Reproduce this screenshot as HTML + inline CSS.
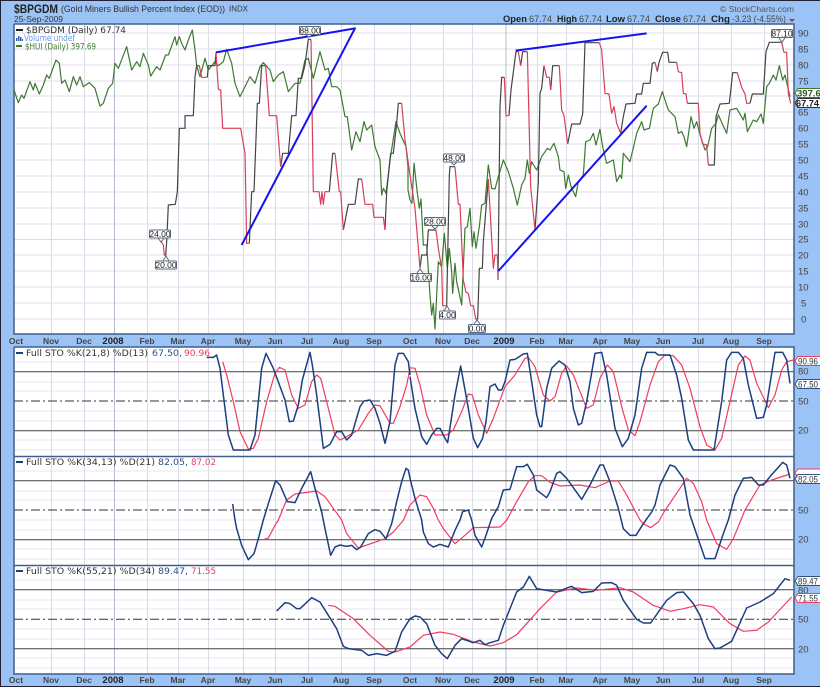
<!DOCTYPE html>
<html><head><meta charset="utf-8"><style>
html,body{margin:0;padding:0;background:#9cc3f5}
svg{display:block}
text{font-family:"Liberation Sans",sans-serif;fill:#333}
.m{font-family:"DejaVu Sans",sans-serif;font-size:9px}
.ax{font-size:8.5px;text-anchor:middle;fill:#444;font-weight:bold}
.ax2{font-size:9.5px;text-anchor:middle;fill:#222;font-weight:bold}
.r{font-size:9.5px;fill:#444}
.c{font-size:8.5px;text-anchor:middle;fill:#222}
.t{fill:none;stroke-linejoin:round}
</style></head><body>
<svg width="820" height="687" viewBox="0 0 820 687" xmlns="http://www.w3.org/2000/svg">
<rect width="820" height="687" fill="#9cc3f5"/>
<path d="M0 .5H820M.5 0V687M0 686.5H820" stroke="#223" fill="none"/>
<rect x="14" y="24" width="780" height="310" fill="#fff"/>
<rect x="14" y="347" width="780" height="327" fill="#fff"/>
<!-- horizontal grid -->
<path d="M14 33H794M14 49H794M14 65H794M14 81H794M14 96H794M14 112H794M14 128H794M14 144H794M14 160H794M14 176H794M14 192H794M14 208H794M14 224H794M14 239.5H794M14 255H794M14 271H794M14 287H794M14 303H794M14 319H794" stroke="#dcdce8" stroke-width="1"/>
<path d="M14 362H794M14 382H794M14 391H794M14 411H794M14 421H794M14 440H794M14 450H794M14 471H794M14 491H794M14 500H794M14 520H794M14 530H794M14 549H794M14 559H794M14 580H794M14 600H794M14 609H794M14 629H794M14 639H794M14 658H794M14 668H794" stroke="#e6e6f0" stroke-width="1"/>
<!-- vertical grid -->
<path d="M51.5 24V334M84.5 24V334M147.5 24V334M178.5 24V334M208.5 24V334M243.5 24V334M275.5 24V334M308.5 24V334M341.5 24V334M374.5 24V334M410.5 24V334M443.5 24V334M472.5 24V334M537.5 24V334M566.5 24V334M600.5 24V334M632.5 24V334M663.5 24V334M698.5 24V334M731.5 24V334M764.5 24V334M51.5 347V674M84.5 347V674M147.5 347V674M178.5 347V674M208.5 347V674M243.5 347V674M275.5 347V674M308.5 347V674M341.5 347V674M374.5 347V674M410.5 347V674M443.5 347V674M472.5 347V674M537.5 347V674M566.5 347V674M600.5 347V674M632.5 347V674M663.5 347V674M698.5 347V674M731.5 347V674M764.5 347V674" stroke="#dcdce8" stroke-width="1"/>
<path d="M114.5 24V334M506 24V334M114.5 347V674M506 347V674" stroke="#b4bccc" stroke-width="1"/>
<!-- reference lines -->
<path d="M14 371.7H794M14 430.7H794M14 480.7H794M14 539.7H794M14 589.7H794M14 648.7H794" stroke="#444" stroke-width="1"/>
<path d="M14 401H794M14 510H794M14 619.3H794" stroke="#333" stroke-width="1" stroke-dasharray="9 3 2 3"/>
<!-- panel borders -->
<path d="M14 24V334H794V24H14M14 347H794V674H14V347M14 456.5H794M14 565.5H794" fill="none" stroke="#3e5f8e" stroke-width="1.5"/>

<!-- main panel, left half -->
<g transform="scale(.33333)">
<path class="t" stroke="#3c7a30" stroke-width="3.6" d="M42 270L55 308 65 285 72 295 90 245 100 270 105 250 118 282 130 255 140 225 148 235 168 180 178 190 185 250 195 240 208 275 220 230 230 255 240 230 250 260 268 248 285 265 300 318 310 310 325 265 338 250 345 190 355 205 380 140 395 210 410 185 420 200 430 160 445 195 452 228 470 200 480 210 497 165 505 165 525 110 530 135 538 110 545 130 555 150 565 120 577 90 585 150 590 197 600 230 615 175 625 210 645 185 655 197 670 185 680 148 695 190 705 250 720 290 735 260 750 230 765 250 780 200 790 188 810 210 820 245 835 225 850 215 865 275 885 250 900 250 915 180 925 175 940 235 960 155 975 210 985 205 995 260 1010 260 1020 270 1035 350 1042 350 1055 450 1068 395 1080 425 1092 365 1100 390 1115 375 1125 440 1140 480 1145 585 1150 565 1158 580 1165 525 1170 480 1188 365 1200 400 1218 440 1224 500 1224 570 1230 600"/>
<path class="t" stroke="#444" stroke-width="3.6" d="M497 767L500 725 505 615 526 613 532 575 538 385 555 385 555 347 580 347 585 230 590 197 598 197M622 232L625 197 645 197 648 157M748 730L755 575 762 575 772 310 778 310 785 197 797 197M842 500L848 460 865 460 875 347 888 347 895 235 905 235 915 195 925 118 933 118M988 575L998 460 1005 460M1030 690L1045 613 1065 613 1075 537 1085 537M1155 690L1160 575 1172 460 1180 460 1190 370 1195 310 1205 310"/>
<path class="t" stroke="#d8405a" stroke-width="3.6" d="M484 725L490 735 493 765 497 767M598 197L605 232 622 232M648 157L655 268 662 270 668 385 722 385 735 460 740 730 748 730M797 197L808 347 830 347 842 500M933 118L940 575 957 575 962 613 966 575 970 613 975 575 988 575M1005 460L1018 575 1022 575 1030 690M1085 537L1095 613 1118 613 1122 652 1150 652 1155 690M1205 310L1215 420 1230 525"/>
<path class="t" stroke="#1414ee" stroke-width="6" d="M648 157L1065 85 725 735"/>
</g>
<!-- main panel, right half -->
<g transform="translate(410,0) scale(.33333)">
<path class="t" stroke="#3c7a30" stroke-width="3.6" d="M0 600L6 610 12 490 21 570 28 625 33 597 40 735 50 735 60 885 65 945 70 910 75 987 85 785 95 800 103 700 112 805 118 745 125 815 128 880 135 790 140 845 155 915 165 685 172 680 180 625 187 740 192 695 198 745 208 680 215 615 225 610 235 495 245 565 255 567 265 530 280 480 295 515 310 565 322 615 335 555 345 535 352 480 358 520 365 485 380 510 395 470 412 445 420 450 432 430 445 470 450 510 462 515 467 565 475 525 483 560 497 590 505 545 520 525 527 425 540 420 550 400 558 435 570 388 578 440 590 490 610 480 620 545 630 525 635 535 640 460 660 485 672 435 680 400 695 365 702 390 718 385 730 325 745 312 757 275 765 300 775 330 795 350 805 400 815 395 822 410 830 440 843 350 852 385 860 365 872 410 885 450 893 440 905 385 918 370 925 345 950 400 960 330 980 325 1000 360 1005 340 1012 395 1030 360 1040 365 1053 342 1060 370 1070 260 1078 250 1090 225 1098 240 1108 197 1118 240 1125 225 1140 290"/>
<path class="t" stroke="#444" stroke-width="3.6" d="M30 805L35 765 50 765 55 690 78 690M110 917L118 525 120 500 135 500M197 957L203 957 208 805 217 805 220 725 228 625 235 537M264 840L270 320 275 232 283 232M297 347L303 270 308 232 318 155 325 155M332 197L338 155 352 155M375 690L385 545 390 280 395 265 402 197M422 270L428 197 448 197M473 432L485 372 510 372 518 342 525 128 568 128M632 400L640 350 648 312 675 310 680 282 695 282 700 250 720 250 727 190 735 187M742 215L747 187 758 157 773 157 777 187 800 187M832 310L865 310M895 495L913 495 918 350 930 312 958 310 968 218 982 218M1020 310L1027 282 1060 282 1068 155 1078 127 1115 127"/>
<path class="t" stroke="#d8405a" stroke-width="3.6" d="M0 525L15 625 30 805M78 690L85 745 95 805 98 917 110 917M135 500L145 613 150 613 160 840 168 877 175 880 182 917 190 917 197 957M235 537L250 805 255 765 262 765 264 840M283 232L288 347 297 347M325 155L332 197M352 155L362 560 375 690M402 197L410 232 418 232 422 270M448 197L455 330 462 347 473 432M568 128L575 150 585 280 597 282 605 340 612 320 620 370 632 400M735 187L742 215M800 187L805 215 815 218 820 280 828 282 832 310M865 310L870 400 878 432 890 435 895 495M982 218L995 262 1005 282 1010 310 1020 310M1115 127L1122 157 1130 157 1135 280 1142 310"/>
<path class="t" stroke="#1414ee" stroke-width="6" d="M317 152L710 100M710 317L265 813"/>
</g>

<!-- Panel 2 -->
<g transform="translate(0,345) scale(.33333)">
<path class="t" stroke="#f03c60" stroke-width="3.6" d="M668 50L680 90 700 170 720 260 745 312 760 310 775 280 800 170 825 85 838 67 855 75 875 150 895 190 915 180 935 110 950 90 962 100 985 190 1005 270 1020 285 1040 275 1075 255 1105 205 1125 180 1140 182 1170 235 1180 235 1200 185 1220 120 1230 70"/>
<path class="t" stroke="#1c3f80" stroke-width="4.5" d="M620 37L640 37 650 30 660 70 685 270 700 315 750 315 765 270 785 70 798 25 820 70 855 165 868 230 880 228 895 180 907 105 930 22 937 60 950 150 970 310 990 298 1010 260 1025 260 1040 285 1055 270 1080 185 1092 168 1110 165 1125 190 1140 235 1155 295 1170 230 1185 60 1195 25 1210 25 1225 50 1230 90"/>
</g>
<g transform="translate(410,345) scale(.33333)">
<path class="t" stroke="#f03c60" stroke-width="3.6" d="M0 68L15 70 30 120 50 210 75 270 110 270 130 255 155 200 175 147 187 150 205 210 230 265 250 220 285 125 315 90 345 40 355 37 375 65 400 150 420 168 435 155 455 85 470 63 490 90 510 140 530 190 550 180 570 100 592 60 610 80 635 185 655 255 675 272 690 230 720 120 745 50 765 30 790 32 815 60 840 130 870 245 890 300 915 315 935 280 960 170 985 60 1005 33 1020 45 1040 115 1075 188 1095 150 1115 75 1130 50 1150 45"/>
<path class="t" stroke="#1c3f80" stroke-width="4.5" d="M0 95L15 190 35 275 50 298 65 270 80 250 90 250 105 280 113 293 135 150 152 63 175 190 190 280 203 308 218 280 228 230 240 125 255 117 265 135 275 135 285 110 300 45 315 43 340 27 352 25 365 110 380 210 390 245 395 245 410 130 425 70 447 48 465 60 480 110 490 190 505 240 515 235 530 170 555 25 575 22 590 90 615 250 637 305 655 280 675 210 695 70 710 22 735 22 745 30 780 30 800 90 815 160 835 285 850 315 912 315 935 170 950 45 965 22 985 22 1000 40 1015 120 1040 220 1060 217 1070 180 1095 22 1118 22 1130 45 1140 115"/>
</g>

<!-- Panel 3 -->
<g transform="translate(0,345) scale(.33333)">
<path class="t" stroke="#f03c60" stroke-width="3.6" d="M790 584L805 579 825 541 835 525 860 465 885 447 950 438 975 455 1000 490 1025 525 1040 566 1075 609 1155 581 1180 561 1210 526 1230 480"/>
<path class="t" stroke="#1c3f80" stroke-width="4.5" d="M698 477L705 525 710 551 725 601 745 644 762 626 775 581 790 525 810 460 827 407 840 420 862 470 885 473 905 430 932 380 945 430 965 501 975 551 992 631 1005 606 1020 600 1040 604 1055 601 1070 614 1082 606 1105 566 1125 554 1140 559 1158 581 1175 536 1190 470 1205 410 1218 370 1225 375 1230 400"/>
</g>
<g transform="translate(410,345) scale(.33333)">
<path class="t" stroke="#f03c60" stroke-width="3.6" d="M0 480L30 450 50 455 70 490 85 525 100 551 135 596 165 571 190 548 270 546 290 526 320 470 355 410 375 392 395 392 420 412 450 423 510 420 555 428 600 408 625 408 650 450 690 525 700 536 722 548 745 531 762 501 830 400 850 415 875 470 890 525 920 596 950 613 970 581 1005 495 1050 420 1085 405 1140 387"/>
<path class="t" stroke="#1c3f80" stroke-width="4.5" d="M0 400L15 460 35 525 40 561 55 596 70 606 90 598 115 606 135 556 150 525 158 500 175 495 185 525 195 571 215 606 228 571 238 541 245 520 265 485 280 435 300 433 320 365 340 365 352 358 370 390 380 435 410 458 420 440 440 385 450 380 470 400 515 463 540 420 570 360 580 360 600 410 625 490 640 551 660 571 678 571 700 536 725 501 735 480 750 420 780 360 795 365 820 400 840 510 885 641 915 641 940 566 955 525 975 450 1000 400 1025 397 1045 420 1060 420 1080 395 1118 352 1130 360 1140 400"/>
</g>

<!-- Panel 4 -->
<g transform="translate(0,512) scale(.33333)">
<path class="t" stroke="#f03c60" stroke-width="3.6" d="M985 280L1005 283 1060 320 1110 370 1165 418 1185 420 1230 405"/>
<path class="t" stroke="#1c3f80" stroke-width="4.5" d="M830 297L855 272 870 275 890 290 900 290 935 257 960 270 985 310 1010 350 1030 403 1045 410 1085 415 1105 430 1130 425 1160 430 1185 418 1205 360 1230 320"/>
</g>
<g transform="translate(410,512) scale(.33333)">
<path class="t" stroke="#f03c60" stroke-width="3.6" d="M0 405L40 370 90 360 130 367 190 390 240 402 280 392 320 368 390 290 440 240 500 228 560 235 630 227 670 240 730 280 780 298 820 290 870 278 910 285 960 335 1000 358 1040 355 1075 330 1145 255"/>
<path class="t" stroke="#1c3f80" stroke-width="4.5" d="M0 320L15 312 30 315 50 335 75 400 95 425 112 440 135 400 155 380 190 392 210 385 225 398 240 392 265 385 280 340 320 240 340 225 358 193 380 230 410 235 440 240 485 223 515 242 550 238 575 213 605 212 620 220 640 265 680 322 700 333 722 333 770 265 800 242 820 240 850 275 870 310 895 380 915 410 930 408 965 388 1010 288 1050 270 1090 245 1125 200 1140 205"/>
</g>

<!-- callouts -->
<path d="M306 35L309 37 312 35M158 238L161 242 164 238M163 261L166 256 169 261M451 162L454 165 457 162M432 226L435 229 438 226M417 273L420 269 423 273M444 311L447 306 450 311M474 324L477 320 480 324M779 38L782 42 785 38" fill="#fff" stroke="#5a6a80" stroke-width="1"/>
<g fill="#fff" stroke="#5a6a80" stroke-width="1">
<rect x="299.5" y="26.5" width="21" height="8" rx="1"/><rect x="149.5" y="230" width="21" height="8" rx="1"/><rect x="155.5" y="261" width="21" height="8" rx="1"/><rect x="443.5" y="154" width="21" height="8" rx="1"/><rect x="424.5" y="217.5" width="21" height="8" rx="1"/><rect x="410.5" y="273.5" width="21" height="8" rx="1"/><rect x="439.5" y="311" width="16" height="8" rx="1"/><rect x="468.5" y="324.5" width="17" height="8" rx="1"/><rect x="771.5" y="29.5" width="21" height="8" rx="1"/>
</g>
<g>
<text class="c" x="310" y="33.5">88.00</text><text class="c" x="160" y="237">24.00</text><text class="c" x="166" y="268">20.00</text><text class="c" x="454" y="161">48.00</text><text class="c" x="435" y="224.5">28.00</text><text class="c" x="421" y="280.5">16.00</text><text class="c" x="447.5" y="318">4.00</text><text class="c" x="477" y="331.5">0.00</text><text class="c" x="782" y="36.5">87.10</text>
</g>

<!-- header -->
<text x="14" y="13" font-size="12" font-weight="bold" textLength="44" lengthAdjust="spacingAndGlyphs" style="fill:#222">$BPGDM</text>
<text x="61" y="12" font-size="9.5" textLength="164" lengthAdjust="spacingAndGlyphs">(Gold Miners Bullish Percent Index (EOD))</text>
<text x="229" y="11.5" font-size="8" textLength="19" lengthAdjust="spacingAndGlyphs">INDX</text>
<text x="14" y="22" font-size="8.5" textLength="49" lengthAdjust="spacingAndGlyphs">25-Sep-2009</text>
<text x="720" y="12" font-size="8.5" textLength="74" lengthAdjust="spacingAndGlyphs" style="fill:#555">© StockCharts.com</text>
<g font-size="9">
<text x="503" y="22" font-weight="bold" textLength="24" lengthAdjust="spacingAndGlyphs" style="fill:#222">Open</text><text x="529" y="22" textLength="23" lengthAdjust="spacingAndGlyphs" style="fill:#444">67.74</text>
<text x="557" y="22" font-weight="bold" textLength="20" lengthAdjust="spacingAndGlyphs" style="fill:#222">High</text><text x="579" y="22" textLength="23" lengthAdjust="spacingAndGlyphs" style="fill:#444">67.74</text>
<text x="606" y="22" font-weight="bold" textLength="19" lengthAdjust="spacingAndGlyphs" style="fill:#222">Low</text><text x="627" y="22" textLength="23" lengthAdjust="spacingAndGlyphs" style="fill:#444">67.74</text>
<text x="655" y="22" font-weight="bold" textLength="26" lengthAdjust="spacingAndGlyphs" style="fill:#222">Close</text><text x="683" y="22" textLength="23" lengthAdjust="spacingAndGlyphs" style="fill:#444">67.74</text>
<text x="711" y="22" font-weight="bold" textLength="19" lengthAdjust="spacingAndGlyphs" style="fill:#222">Chg</text><text x="732" y="22" textLength="54" lengthAdjust="spacingAndGlyphs" style="fill:#444">-3.23 (-4.55%)</text>
</g>
<path d="M789 19H795L792 22Z" fill="#d02030"/>

<!-- legends -->
<path d="M16 30H23" stroke="#222" stroke-width="2"/>
<text class="m" x="26" y="33" textLength="100" lengthAdjust="spacingAndGlyphs">$BPGDM (Daily) 67.74</text>
<path d="M16 41h1.5v-3h-1.5zM18 41h1.5v-5h-1.5zM20 41h1.5v-4h-1.5zM22 41h1v-2h-1z" fill="#2f5fa8"/>
<text class="m" x="24" y="41" textLength="51" lengthAdjust="spacingAndGlyphs" style="fill:#6a9ae8">Volume undef</text>
<path d="M16 46H22" stroke="#3c7a30" stroke-width="2"/>
<text class="m" x="25" y="49.5" textLength="71" lengthAdjust="spacingAndGlyphs" style="fill:#3c7a30">$HUI (Daily) 397.69</text>

<path d="M16 353H23M16 462H23M16 571H23" stroke="#1c3f80" stroke-width="2"/>
<text class="m" x="26" y="356" textLength="122" lengthAdjust="spacingAndGlyphs">Full STO %K(21,8) %D(13)</text>
<text class="m" x="152" y="356" textLength="30" lengthAdjust="spacingAndGlyphs" style="fill:#2c5088">67.50,</text>
<text class="m" x="184" y="356" textLength="26" lengthAdjust="spacingAndGlyphs" style="fill:#f03c60">90.96</text>
<text class="m" x="26" y="465" textLength="129" lengthAdjust="spacingAndGlyphs">Full STO %K(34,13) %D(21)</text>
<text class="m" x="158" y="465" textLength="30" lengthAdjust="spacingAndGlyphs" style="fill:#2c5088">82.05,</text>
<text class="m" x="191" y="465" textLength="25" lengthAdjust="spacingAndGlyphs" style="fill:#f03c60">87.02</text>
<text class="m" x="26" y="574" textLength="129" lengthAdjust="spacingAndGlyphs">Full STO %K(55,21) %D(34)</text>
<text class="m" x="158" y="574" textLength="30" lengthAdjust="spacingAndGlyphs" style="fill:#2c5088">89.47,</text>
<text class="m" x="191" y="574" textLength="25" lengthAdjust="spacingAndGlyphs" style="fill:#f03c60">71.55</text>

<!-- x axis labels -->
<g>
<text class="ax" x="16" y="344">Oct</text><text class="ax" x="51" y="344">Nov</text><text class="ax" x="84" y="344">Dec</text><text class="ax2" x="113" y="344">2008</text><text class="ax" x="147" y="344">Feb</text><text class="ax" x="178" y="344">Mar</text><text class="ax" x="208" y="344">Apr</text><text class="ax" x="243" y="344">May</text><text class="ax" x="275" y="344">Jun</text><text class="ax" x="307" y="344">Jul</text><text class="ax" x="341" y="344">Aug</text><text class="ax" x="374" y="344">Sep</text><text class="ax" x="410" y="344">Oct</text><text class="ax" x="443" y="344">Nov</text><text class="ax" x="472" y="344">Dec</text><text class="ax2" x="504" y="344">2009</text><text class="ax" x="537" y="344">Feb</text><text class="ax" x="566" y="344">Mar</text><text class="ax" x="600" y="344">Apr</text><text class="ax" x="632" y="344">May</text><text class="ax" x="663" y="344">Jun</text><text class="ax" x="698" y="344">Jul</text><text class="ax" x="731" y="344">Aug</text><text class="ax" x="764" y="344">Sep</text>
<text class="ax" x="16" y="683">Oct</text><text class="ax" x="51" y="683">Nov</text><text class="ax" x="84" y="683">Dec</text><text class="ax2" x="113" y="683">2008</text><text class="ax" x="147" y="683">Feb</text><text class="ax" x="178" y="683">Mar</text><text class="ax" x="208" y="683">Apr</text><text class="ax" x="243" y="683">May</text><text class="ax" x="275" y="683">Jun</text><text class="ax" x="307" y="683">Jul</text><text class="ax" x="341" y="683">Aug</text><text class="ax" x="374" y="683">Sep</text><text class="ax" x="410" y="683">Oct</text><text class="ax" x="443" y="683">Nov</text><text class="ax" x="472" y="683">Dec</text><text class="ax2" x="504" y="683">2009</text><text class="ax" x="537" y="683">Feb</text><text class="ax" x="566" y="683">Mar</text><text class="ax" x="600" y="683">Apr</text><text class="ax" x="632" y="683">May</text><text class="ax" x="663" y="683">Jun</text><text class="ax" x="698" y="683">Jul</text><text class="ax" x="731" y="683">Aug</text><text class="ax" x="764" y="683">Sep</text>
</g>

<!-- y axis labels -->
<g transform="translate(0,-.5)">
<text class="r" x="798" y="37">90</text><text class="r" x="798" y="53">85</text><text class="r" x="798" y="69">80</text><text class="r" x="798" y="85">75</text><text class="r" x="798" y="116">65</text><text class="r" x="798" y="132">60</text><text class="r" x="798" y="148">55</text><text class="r" x="798" y="164">50</text><text class="r" x="798" y="180">45</text><text class="r" x="798" y="196">40</text><text class="r" x="798" y="212">35</text><text class="r" x="798" y="228">30</text><text class="r" x="798" y="243">25</text><text class="r" x="798" y="259">20</text><text class="r" x="798" y="275">15</text><text class="r" x="798" y="291">10</text><text class="r" x="801" y="307">5</text><text class="r" x="801" y="323">0</text>
<text class="r" x="798" y="375">80</text><text class="r" x="798" y="405">50</text><text class="r" x="798" y="434">20</text>
<text class="r" x="798" y="514">50</text><text class="r" x="798" y="543">20</text>
<text class="r" x="798" y="594">80</text><text class="r" x="798" y="623">50</text><text class="r" x="798" y="653">20</text>
</g>
<g fill="#fff" stroke-width="1">
<path d="M822 88.5H798L795 93 798 97.5H822Z" stroke="#3c7a30"/>
<path d="M822 98.5H798L795 103 798 107.5H822Z" stroke="#333"/>
<path d="M822 356.5H798L795 361 798 365.5H822Z" stroke="#f03c60"/>
<path d="M822 379.5H798L795 384 798 388.5H822Z" stroke="#2c5088"/>
<path d="M822 469H798L795 473 798 477H822Z" stroke="#f03c60"/>
<path d="M822 474.5H798L795 479 798 483.5H822Z" stroke="#2c5088"/>
<path d="M822 576.5H798L795 581 798 585.5H822Z" stroke="#2c5088"/>
<path d="M822 593.5H798L795 598 798 602.5H822Z" stroke="#f03c60"/>
</g>
<g font-size="9.5">
<text x="797" y="96.5" font-weight="bold" style="fill:#2c5a28">397.69</text>
<text x="796" y="106.5" font-weight="bold" textLength="23" lengthAdjust="spacingAndGlyphs" style="fill:#222">67.74</text>
<text x="798" y="364.5" textLength="20" lengthAdjust="spacingAndGlyphs" style="fill:#333">90.96</text>
<text x="798" y="387.5" textLength="20" lengthAdjust="spacingAndGlyphs" style="fill:#333">67.50</text>
<text x="798" y="482.5" textLength="20" lengthAdjust="spacingAndGlyphs" style="fill:#333">82.05</text>
<text x="798" y="584.5" textLength="20" lengthAdjust="spacingAndGlyphs" style="fill:#333">89.47</text>
<text x="798" y="601.5" textLength="20" lengthAdjust="spacingAndGlyphs" style="fill:#333">71.55</text>
</g>
</svg>
</body></html>
